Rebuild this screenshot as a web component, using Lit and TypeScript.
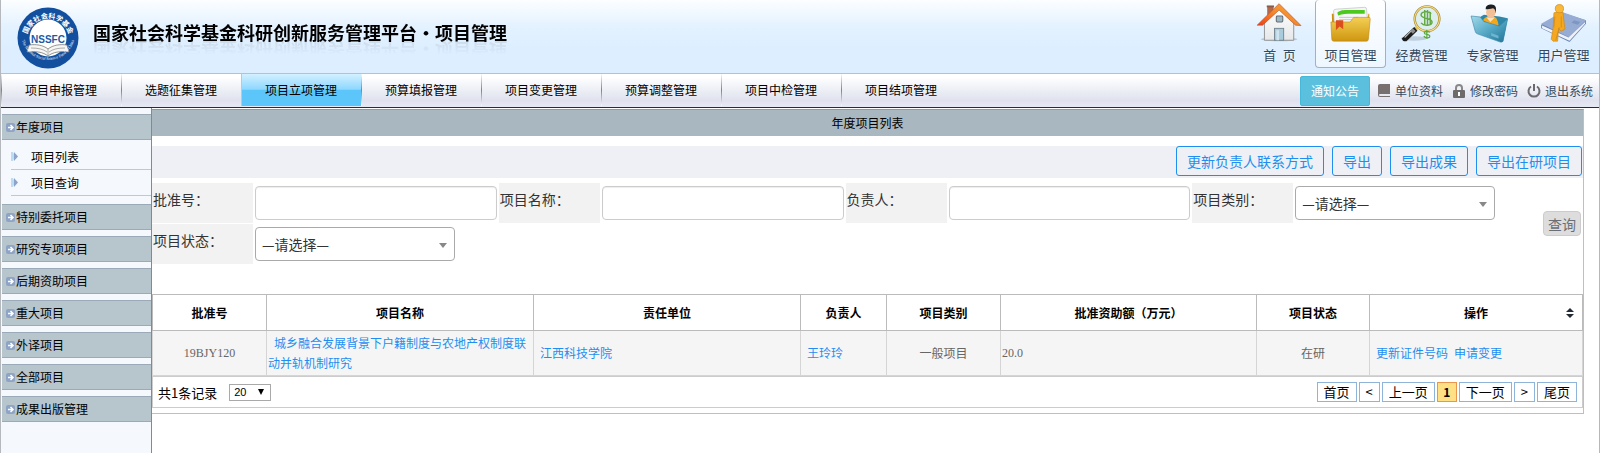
import { LitElement, html, css, svg } from "lit";
import { customElement } from "lit/decorators.js";
import { classMap } from "lit/directives/class-map.js";

const icons: Record<string, unknown> = {
  home: svg`
    <defs>
      <linearGradient id="roof" x1="0" y1="1" x2="1" y2="0"><stop offset="0" stop-color="#ee3d16"/><stop offset=".5" stop-color="#f58a2c"/><stop offset="1" stop-color="#f7a63e"/></linearGradient>
      <linearGradient id="wall" x1="0" y1="0" x2="0" y2="1"><stop offset="0" stop-color="#fff"/><stop offset="1" stop-color="#e6e7e8"/></linearGradient>
    </defs>
    <ellipse cx="24" cy="43" rx="20" ry="2" fill="#9fb0bd" opacity=".6"/>
    <path d="M11.500 7h6v8l-6 6z" fill="#b3694a" stroke="#8a6a5c" stroke-width=".8"/><path d="M10.500 6h8v2h-8z" fill="#8b5a48"/>
    <path d="M8 25L24 9l16 16v19H8z" fill="url(#wall)" stroke="#8e8e8e" stroke-width="1"/>
    <path d="M24 4L0 27.500h6L24 11l18 16.500L48 28z" fill="url(#roof)" stroke="#b8552a" stroke-width=".7"/>
    <rect x="21" y="17.500" width="7" height="6.500" rx="1" fill="#9fb8c6" stroke="#666f76" stroke-width="1.200"/>
    <rect x="19" y="31" width="10" height="13" fill="#a9cbdb" stroke="#71838e"/><path d="M21 33h3v11h-3z" fill="#cfe4ee"/>`,
  folder: svg`
    <defs><linearGradient id="fold" x1="0" y1="0" x2="0" y2="1"><stop offset="0" stop-color="#f3cf55"/><stop offset="1" stop-color="#cf960f"/></linearGradient></defs>
    <path d="M4 15h3v26H5z" fill="#c98e0c"/><path d="M44 15h1v10h-3z" fill="#d5a01d"/>
    <path d="M6 12q0-2 3-2l31-2q2 0 2 2l2 22H7z" fill="#f6f6f6" stroke="#b8b8b8" stroke-width=".7"/>
    <path d="M10 14c3-3 7-3 12-3l18 0v4H26c-6 0-10 0-15 2z" fill="#4cc81f"/>
    <path d="M12 19h21M12 21.500h15" stroke="#c4c4c4"/>
    <path d="M3 24h21l4-5h17q1 0 1 2l-2 22q0 2-2 2H6q-2 0-2-2z" fill="url(#fold)" stroke="#b88310" stroke-width=".6"/>
    <path d="M8.500 22h8v10l-4-3-4 4z" fill="#d94e1c"/>`,
  money: svg`
    <ellipse cx="16" cy="42" rx="14" ry="2.500" fill="#8f9ca6" opacity=".4"/>
    <circle cx="30.500" cy="20.500" r="13.500" fill="#dcefee" stroke="#a98425" stroke-width="2.600"/>
    <circle cx="30.500" cy="20.500" r="13.500" fill="none" stroke="#f3dc8a" stroke-width="1.200"/>
    <path d="M35 15c-2-3-11-3-11 1.500 0 4.500 12 3 12 7.500 0 4-9 5-12 1M28 11v17M31 11v17M34 13v14" fill="none" stroke="#64a943" stroke-width="1.600"/>
    <path d="M18.500 28l3 3-2 2-3-3z" fill="#e3c65a"/><path d="M16.500 29.500l3.500 4L8 45q-4 1-5-3z" fill="#1b1b1b"/><path d="M15 31l3 3-3 3-3-3z" fill="#8c8c8c"/><path d="M6 41l7-7" stroke="#bbb" stroke-width="1.200"/>
    <path d="M33.500 35.500c-1-2-6-1.500-6 .5s6 1.200 6 3.500-5 2.500-6.500 0M30.300 32.500v10" fill="none" stroke="#5aa83a" stroke-width="1.300"/>`,
  expert: svg`
    <defs><linearGradient id="blue" x1="0" y1="0" x2="1" y2="1"><stop offset="0" stop-color="#a3d9ea"/><stop offset=".5" stop-color="#55a9c6"/><stop offset="1" stop-color="#1f7294"/></linearGradient></defs>
    <path d="M10 19l5-3 17 2 9 2-5 26-6-2z" fill="#2f87a8"/>
    <path d="M14 22c2-3 6-5 9-4 4-1 7 2 8 9l-3 3z" fill="#f2a71d"/>
    <path d="M18 19l4 5 5-5z" fill="#f7e3c8"/>
    <ellipse cx="22.500" cy="13.500" rx="5" ry="6.500" fill="#f3bf95"/>
    <path d="M17 10c0-4 3-5 6-5 6 0 6 5 4.500 10 0-3 0-5-2.500-6-3 1-6 1-8 1z" fill="#1c1f22"/>
    <path d="M1 17.500l10 1 4 5 17 5 9-8-5 24q-.5 2-3 1.500L8 37q-2-.5-2.500-3z" fill="url(#blue)" stroke="#3a89a6" stroke-width=".7"/>
    <path d="M23 36l8 3v3l-8-3z" fill="#6bb7d1"/>`,
  user: svg`
    <path d="M0 27L23 14l26 8v4L31 46 0 31z" fill="#6c87b8"/>
    <path d="M0 26L23 13l26 9-18 19z" fill="#97acd3"/>
    <path d="M1 28l29 13 18-17v2L31 44.500 1 31z" fill="#eef2fa"/>
    <path d="M36 22l7 2-3 3-7-2z" fill="#7f96c4"/>
    <path d="M14 14q6-2 10 0l2 18-4 2-3-3-1 14h-5l-2-2 2-11z" fill="#f5a81f" stroke="#cf860f" stroke-width=".7"/>
    <path d="M20 30l-4 14M22 18v12M15 18l-1 12" stroke="#cf8a1a" stroke-width=".9" fill="none"/>
    <circle cx="20" cy="9.500" r="4.500" fill="#f8b93a" stroke="#d48c14" stroke-width=".8"/>`,
};

@customElement("fund-logo")
export class FundLogo extends LitElement {
  static styles = css`
    :host { display: block; }
    .logo { display: block; width: 62px; height: 62px; }
    .cn { font: bold 7px "Noto Sans CJK SC", sans-serif; fill: #fff; }
    .en { font: 4px "Liberation Serif", serif; fill: #fff; }
    .abbr { font: bold 10px "Liberation Sans", sans-serif; fill: #1a5ba6; }
  `;
  render() {
    return html`<svg class="logo" viewBox="0 0 62 62" role="img" aria-label="NSSFC">
      <defs>
        <path id="top" d="M9.500 33a21.500 21.500 0 0 1 43 0" />
        <path id="bottom" d="M4 26a27 27 0 0 0 54 0" />
      </defs>
      <circle cx="31" cy="31" r="30.500" fill="#12509f" />
      <circle cx="31" cy="31" r="18.500" fill="#fff" />
      <path d="M12 38c7-1 14 0 19 4 5-4 12-5 19-4l2 7c-9-1-16 0-21 4-5-4-12-5-21-4z" fill="#f6f6f4" stroke="#777" stroke-width=".8" />
      <path d="M31 42v6M14 41c7 0 12 1 16 4M48 41c-7 0-12 1-16 4" fill="none" stroke="#999" stroke-width=".8" />
      <text class="abbr" x="31" y="36" text-anchor="middle">NSSFC</text>
      <text class="cn"><textPath href="#top" startOffset="50%" text-anchor="middle">国家社会科学基金</textPath></text>
      <text class="en"><textPath href="#bottom" startOffset="50%" text-anchor="middle">The National Social Science Fund of China</textPath></text>
    </svg>`;
  }
}

@customElement("app-header")
export class AppHeader extends LitElement {
  static styles = css`
    :host { display: block; }
    .banner { display: flex; height: 73px; justify-content: space-between; background: linear-gradient(#fcfeff, #e4f2ff 26px, #dceeff 50px, #dceeff); border-bottom: 1px solid #b9c0c8; }
    .brand { display: flex; align-items: flex-start; gap: 14px; padding: 7px 0 0 16px; }
    .title { margin: 13px 0 0; font-size: 18px; line-height: 24px; font-weight: 700; color: #000; white-space: nowrap; -webkit-box-reflect: below -6px linear-gradient(transparent 30%, rgba(0, 0, 0, 0.1)); }
    .modules { display: flex; }
    .module { box-sizing: border-box; width: 71px; height: 68px; display: flex; flex-direction: column; align-items: center; border: 1px solid transparent; border-top: 0; border-radius: 4px; color: #34495e; font-size: 13px; line-height: 24px; text-decoration: none; text-shadow: 0 0 2px #fff; white-space: nowrap; }
    .module.current { border-color: #a9afb8; background: linear-gradient(#fff, #eef7ff); }
    .pic { width: 50px; height: 47px; }
    .bar { display: flex; justify-content: space-between; height: 33px; border-bottom: 1px solid #1c2a5c; background: linear-gradient(#fff 10%, #dfe2ee 80%, #e6e8f4); }
    .tabs { display: flex; }
    .tab { box-sizing: border-box; width: 120px; height: 32px; padding-left: 23px; line-height: 32px; font-size: 12px; color: #000; text-decoration: none; border-left: 1px solid; border-image: linear-gradient(#fff, #6b86b4 50%, #fff) 1; white-space: nowrap; }
    .tab.current { background: linear-gradient(#d3f0ff, #8dd8ff 48%, #5cc6fb 50%, #5cc6fb); border-image: none; border-color: #8dd8ff; }
    .tools { display: flex; align-items: center; padding-right: 6px; gap: 9px; font-size: 12px; line-height: 16px; }
    .notice { height: 30px; padding: 0 10px; font: inherit; color: #fff; background: #5bc0de; border: 1px solid #46b8da; border-radius: 2px; margin-right: -2px; }
    .tool { display: flex; align-items: center; gap: 4px; color: #34495e; text-decoration: none; }
    .glyph { width: 14px; height: 14px; }
  `;
  modules = [["home", "首\u2002页"], ["folder", "项目管理"], ["money", "经费管理"], ["expert", "专家管理"], ["user", "用户管理"]];
  tabs = ["项目申报管理", "选题征集管理", "项目立项管理", "预算填报管理", "项目变更管理", "预算调整管理", "项目中检管理", "项目结项管理"];
  render() {
    return html`
      <div class="banner">
        <div class="brand"><fund-logo></fund-logo><h1 class="title">国家社会科学基金科研创新服务管理平台・项目管理</h1></div>
        <nav class="modules">
          ${this.modules.map(([icon, label], i) => html`<a href="#" class=${classMap({ module: true, current: i === 1 })}><svg class="pic" viewBox="0 0 50 47">${icons[icon]}</svg>${label}</a>`)}
        </nav>
      </div>
      <div class="bar">
        <nav class="tabs">${this.tabs.map((t, i) => html`<a href="#" class=${classMap({ tab: true, current: i === 2 })}>${t}</a>`)}</nav>
        <div class="tools">
          <button class="notice">通知公告</button>
          <a href="#" class="tool"><svg class="glyph" viewBox="0 0 14 14"><path d="M3 0h10v10H3q-1 0-1 1t1 1h10v1H3q-2 0-2-2V2q0-2 2-2z" fill="#77706f"/></svg>单位资料</a>
          <a href="#" class="tool"><svg class="glyph" viewBox="0 0 14 14"><path d="M4 7V4q0-3 3-3t3 3v3" fill="none" stroke="#888" stroke-width="2"/><rect x="1" y="6" width="12" height="8" rx="1" fill="#6f6b6b"/><path d="M6 8h2v4H6z" fill="#fff"/></svg>修改密码</a>
          <a href="#" class="tool"><svg class="glyph" viewBox="0 0 14 14"><path d="M4 2.500a5.500 5.500 0 1 0 6 0M7 0v7" fill="none" stroke="#6c6a6e" stroke-width="2"/></svg>退出系统</a>
        </div>
      </div>`;
  }
}

@customElement("side-menu")
export class SideMenu extends LitElement {
  static styles = css`
    :host { display: block; box-sizing: border-box; width: 151px; padding: 6px 0 0 1px; background: #f5f9fd; border-right: 1px solid #7d8b96; font-size: 12px; }
    .group { box-sizing: border-box; width: 100%; height: 26px; display: flex; align-items: center; gap: 1px; margin-bottom: 6px; padding: 0 0 0 4px; background: #b7c5cd; border: solid #9aabb7; border-width: 1px 0; font: inherit; line-height: 22px; color: #000; text-align: left; }
    .plus { width: 9px; height: 9px; }
    .items { list-style: none; margin: -2px 0 8px; padding: 0 0 0 9px; }
    .item { height: 25px; border-bottom: 1px solid #c4c8ce; }
    .link { display: flex; align-items: center; gap: 13px; height: 25px; color: #000; text-decoration: none; }
    .arrow { width: 7px; height: 9px; }
  `;
  groups = ["年度项目", "特别委托项目", "研究专项项目", "后期资助项目", "重大项目", "外译项目", "全部项目", "成果出版管理"];
  render() {
    return html`${this.groups.map((g, i) => html`
      <button class="group"><svg class="plus" viewBox="0 0 9 9"><rect width="9" height="9" rx="2" fill="#8fa3c6"/><path d="M2 4.500h5M4.500 2l2.500 2.500L4.500 7" stroke="#fff" stroke-width="1.500" fill="none"/></svg>${g}</button>
      ${i ? "" : html`<ul class="items">${["项目列表", "项目查询"].map((t) => html`<li class="item"><a class="link" href="#"><svg class="arrow" viewBox="0 0 7 9"><path d="M0 0h2l2 4.500L2 9H0z" fill="#bcdcf2"/><path d="M3 0l4 4.500L3 9z" fill="#8ba3cd"/></svg>${t}</a></li>`)}</ul>`}`)}`;
  }
}

@customElement("search-form")
export class SearchForm extends LitElement {
  static styles = css`
    :host { display: block; padding-top: 5px; }
    .form { display: grid; grid-template-columns: repeat(4, 101px minmax(0, 1fr)) 44px; grid-auto-rows: 40px; column-gap: 2px; row-gap: 1px; }
    .label { background: #f2f2f2; padding: 5px 1px; height: 30px; font-size: 14px; line-height: 22px; color: #333; }
    .box { box-sizing: border-box; margin-top: 3px; height: 34px; border: 1px solid #ccc; border-radius: 4px; background: #fff; box-shadow: inset 0 1px 1px rgba(0, 0, 0, 0.075); width: 100%; font: inherit; font-size: 14px; color: #333; }
    .drop { width: 200px; border-color: #aaa; box-shadow: none; padding: 0 24px 0 6px; appearance: none; background: #fff url('data:image/svg+xml,<svg xmlns="http://www.w3.org/2000/svg" width="8" height="5"><path d="M0 0h8L4 5z" fill="%23888"/></svg>') no-repeat right 7px top 15px; }
    .query { grid-column: 9; grid-row: 1 / 3; align-self: center; justify-self: end; height: 25px; margin: 0 2px 0 0; width: 38px; padding: 0; font: inherit; font-size: 14px; line-height: 20px; color: #6b6d75; background: #ddd; border: 1px solid #ccc; border-radius: 4px; }
  `;
  fields = [["批准号：", "input"], ["项目名称：", "input"], ["负责人：", "input"], ["项目类别：", "select"], ["项目状态：", "select"]];
  render() {
    return html`<form class="form" @submit=${(e: Event) => e.preventDefault()}>
      ${this.fields.map(([label, kind], i) => html`
        <label class="label" for=${"f" + i}>${label}</label>
        ${kind === "input" ? html`<input class="box" id=${"f" + i} type="text" />` : html`<div><select class="box drop" id=${"f" + i}><option>—请选择—</option></select></div>`}`)}
      <button class="query">查询</button>
    </form>`;
  }
}

@customElement("project-table")
export class ProjectTable extends LitElement {
  static styles = css`
    :host { display: block; font-size: 12px; color: #666; }
    .grid { width: 100%; table-layout: fixed; border-collapse: collapse; }
    .c1 { width: 114px; } .c2 { width: 267px; } .c3 { width: 267px; } .c4 { width: 86px; }
    .c5 { width: 114px; } .c6 { width: 256px; } .c7 { width: 113px; } .c8 { width: 213px; }
    .head { height: 35px; padding: 0; border: 1px solid #bbb; color: #000; font-weight: 700; }
    .last { display: grid; grid-template-columns: 16px 1fr 16px; align-items: center; }
    .sort { width: 8px; height: 10px; grid-column: 3; }
    .cell { height: 44px; padding: 0 1px; border: 1px solid #d5d5d5; background: #f5f5f5; text-align: center; line-height: 20px; }
    .left { text-align: left; }
    .pad { padding-left: 6px; }
    .num { font-family: "Liberation Serif", serif; }
    .link { color: #1e8ff0; text-decoration: none; }
    .pager { display: flex; align-items: center; justify-content: space-between; box-sizing: border-box; height: 32px; padding: 0 5px; border: 1px solid #ccc; font-size: 13px; color: #000; }
    .side { display: flex; align-items: center; gap: 12px; }
    .size { width: 42px; height: 17px; padding: 0 4px; appearance: none; border: 1px solid #a9a9a9; border-radius: 0; font: 11px/15px "Liberation Sans", sans-serif; color: #000; background: #fff url('data:image/svg+xml,<svg xmlns="http://www.w3.org/2000/svg" width="6" height="6"><path d="M0 0h6L3 6z" fill="%23000"/></svg>') no-repeat right 6px top 4px; }
    .pages { display: flex; gap: 2px; }
    .page { height: 20px; padding: 0 6px; min-width: 20px; border: 1px solid #8fb4d9; background: #fff; font: inherit; line-height: 18px; color: #000; }
    .page.on { background: #ffe085; border-color: #e9954c; font-weight: 700; font-size: 12px; padding: 0; }
  `;
  heads = ["批准号", "项目名称", "责任单位", "负责人", "项目类别", "批准资助额（万元）", "项目状态"];
  render() {
    return html`
      <table class="grid">
        <colgroup>${[1, 2, 3, 4, 5, 6, 7, 8].map((n) => html`<col class=${"c" + n} />`)}</colgroup>
        <thead><tr>
          ${this.heads.map((h) => html`<th class="head">${h}</th>`)}
          <th class="head"><div class="last"><span></span><span>操作</span><svg class="sort" viewBox="0 0 8 10"><path d="M0 4l4-4 4 4zM0 6h8l-4 4z" fill="#222b33"/></svg></div></th>
        </tr></thead>
        <tbody><tr>
          <td class="cell num">19BJY120</td>
          <td class="cell left"><a class="link" href="#">&ensp;城乡融合发展背景下户籍制度与农地产权制度联动并轨机制研究</a></td>
          <td class="cell left pad"><a class="link" href="#">江西科技学院</a></td>
          <td class="cell left pad"><a class="link" href="#">王玲玲</a></td>
          <td class="cell">一般项目</td>
          <td class="cell left num">20.0</td>
          <td class="cell">在研</td>
          <td class="cell left pad"><a class="link" href="#">更新证件号码</a>&ensp;<a class="link" href="#">申请变更</a></td>
        </tr></tbody>
      </table>
      <div class="pager">
        <label class="side">共1条记录<select class="size"><option>20</option></select></label>
        <div class="pages">${["首页", "<", "上一页", "1", "下一页", ">", "尾页"].map((p) => html`<button class=${classMap({ page: true, on: p === "1" })}>${p}</button>`)}</div>
      </div>`;
  }
}

@customElement("app-root")
export class AppRoot extends LitElement {
  static styles = css`
    :host { display: flex; flex-direction: column; box-sizing: border-box; min-height: 100vh; border: solid #b5b8bc; border-width: 0 1px; background: #fff; font-family: "Noto Sans CJK SC", "Liberation Sans", sans-serif; }
    .body { flex: 1; display: grid; grid-template-columns: 151px minmax(0, 1fr); }
    .panel { align-self: start; margin: 1px 15px 0 0; padding-bottom: 5px; border: solid #bfbfbf; border-width: 1px 1px 1px 0; border-top-color: #8d999e; }
    .caption { margin: 0; height: 26px; font-size: 12px; line-height: 26px; font-weight: 400; text-align: center; background: #a9b8c0; color: #000; }
    .actions { display: flex; justify-content: flex-end; gap: 8px; height: 32px; margin-top: 10px; padding-right: 1px; background: #eff0f5; }
    .action { height: 30px; padding: 0 10px; font: inherit; font-size: 14px; line-height: 28px; color: #1e8ff0; background: transparent; border: 1px solid #1e8ff0; border-radius: 3px; }
    .list { margin: 30px 0 0; }
  `;
  render() {
    return html`
      <app-header></app-header>
      <div class="body">
        <side-menu></side-menu>
        <main class="panel">
          <h2 class="caption">年度项目列表</h2>
          <div class="actions">${["更新负责人联系方式", "导出", "导出成果", "导出在研项目"].map((t) => html`<button class="action">${t}</button>`)}</div>
          <search-form></search-form>
          <project-table class="list"></project-table>
        </main>
      </div>`;
  }
}
